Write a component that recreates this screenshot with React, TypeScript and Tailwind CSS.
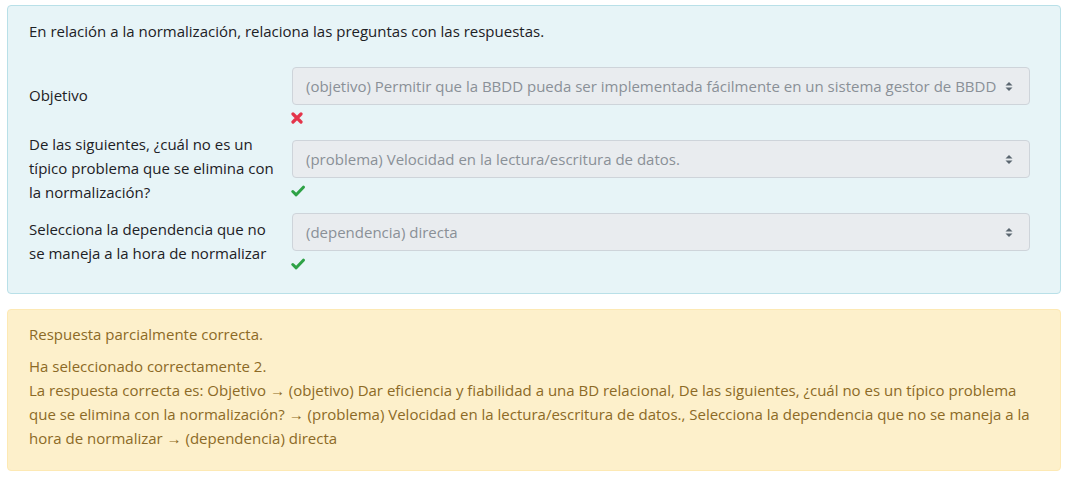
import React from "react";

const Sort = () => (
  <svg width="8" height="11" viewBox="0 0 8 11" className="shrink-0">
    <path d="M0.5 4.5 L4 1 L7.5 4.5 Z" fill="#5b6670" />
    <path d="M0.5 6.5 L4 10 L7.5 6.5 Z" fill="#5b6670" />
  </svg>
);

const Cross = () => (
  <svg width="12" height="12" viewBox="0 0 12 12">
    <path d="M2 2 L10 10 M10 2 L2 10" stroke="#e4344a" strokeWidth="3.2" strokeLinecap="round" />
  </svg>
);

const Check = () => (
  <svg width="14" height="12" viewBox="0 0 14 12">
    <path d="M1.8 6.5 L5.2 9.8 L12.4 2.2" stroke="#2ea246" strokeWidth="3" fill="none" strokeLinecap="round" strokeLinejoin="round" />
  </svg>
);

function Row({ label, value, ok, pt }: { label: React.ReactNode; value: string; ok: boolean; pt: string }) {
  return (
    <div className={`flex items-center ${pt}`}>
      <div className="w-[263px] shrink-0 pr-3">{label}</div>
      <div className="flex-1 min-w-0">
        <div className="h-[38px] flex items-center rounded-[4px] border border-[#ced4da] bg-[#e9ecef] pl-[13px] pr-[16px] text-[#8a9097]">
          <span className="flex-1 min-w-0 overflow-hidden whitespace-nowrap">{value}</span>
          <span className="ml-1"><Sort /></span>
        </div>
        <div className="h-[18px] flex items-start pt-[7px] -ml-[1px]">{ok ? <Check /> : <Cross />}</div>
      </div>
    </div>
  );
}

export default function App() {
  return (
    <div className="bg-white w-[1077px] h-[479px] pt-[5px] pl-[7px] pr-[16px] text-[15px] leading-[24px] text-[#1d2125]" style={{ fontFamily: '"Open Sans", "Noto Sans", sans-serif' }}>
      <div className="rounded-[4px] border border-[#b9e0e8] bg-[#e7f4f7] pt-[13px] pl-[21px] pr-[30px] pb-[24px]">
        <div className="mb-[24px]">En relación a la normalización, relaciona las preguntas con las respuestas.</div>
        <Row pt="pt-0" label="Objetivo" value="(objetivo) Permitir que la BBDD pueda ser implementada fácilmente en un sistema gestor de BBDD" ok={false} />
        <Row pt="pt-[9px]" label="De las siguientes, ¿cuál no es un típico problema que se elimina con la normalización?" value="(problema) Velocidad en la lectura/escritura de datos." ok={true} />
        <Row pt="pt-[9px]" label="Selecciona la dependencia que no se maneja a la hora de normalizar" value="(dependencia) directa" ok={true} />
      </div>
      <div className="mt-[15px] rounded-[4px] border border-[#fde9b4] bg-[#fdf0cb] pt-[12px] pl-[21px] pr-[18px] pb-[20px] text-[#8c6a26]">
        <div className="mb-[8px]">Respuesta parcialmente correcta.</div>
        <div>Ha seleccionado correctamente 2.</div>
        <div>La respuesta correcta es: Objetivo → (objetivo) Dar eficiencia y fiabilidad a una BD relacional, De las siguientes, ¿cuál no es un típico problema que se elimina con la normalización? → (problema) Velocidad en la lectura/escritura de datos., Selecciona la dependencia que no se maneja a la hora de normalizar → (dependencia) directa</div>
      </div>
    </div>
  );
}
